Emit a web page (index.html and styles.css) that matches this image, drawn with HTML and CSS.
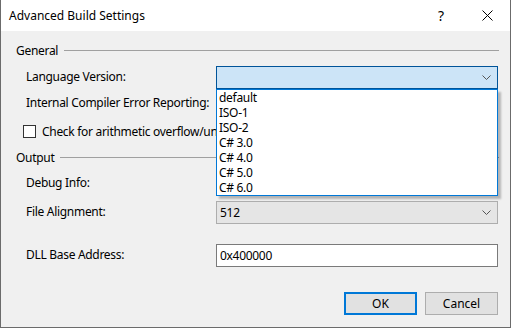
FILE: index.html
```html
<!DOCTYPE html>
<html lang="en">
<head>
  <meta charset="UTF-8">
  <title>Advanced Build Settings</title>
  <link rel="stylesheet" href="styles.css">
</head>
<body>
  <div class="window">
    <div class="titlebar">
      <span class="title">Advanced Build Settings</span>
      <span class="help">?</span>
      <span class="close">
        <svg width="11" height="11" viewBox="0 0 11 11"><path d="M0.5 0.5 L10.5 10.5 M10.5 0.5 L0.5 10.5" stroke="#000" stroke-width="1" fill="none"/></svg>
      </span>
    </div>

    <div class="content">
      <div class="group-head">
        <span>General</span>
        <div class="line"></div>
      </div>

      <div class="row first">
        <label>Language Version:</label>
        <div class="combo-wrap">
          <div class="combo open">
            <span></span>
            <svg class="chev" width="9" height="5" viewBox="0 0 9 5"><path d="M0.5 0.5 L4.5 4.5 L8.5 0.5" stroke="#555" fill="none"/></svg>
          </div>
          <ul class="list">
            <li>default</li>
            <li>ISO-1</li>
            <li>ISO-2</li>
            <li>C# 3.0</li>
            <li>C# 4.0</li>
            <li>C# 5.0</li>
            <li>C# 6.0</li>
          </ul>
        </div>
      </div>

      <div class="row internal">
        <label>Internal Compiler Error Reporting:</label>
        <div class="combo"></div>
      </div>

      <div class="check-row">
        <span class="box"></span>
        <span class="check-text">Check for arithmetic overflow/underflow</span>
      </div>

      <div class="group-head output">
        <span>Output</span>
        <div class="line"></div>
      </div>

      <div class="row debug">
        <label>Debug Info:</label>
        <div class="combo"></div>
      </div>

      <div class="row align">
        <label>File Alignment:</label>
        <div class="combo grey">
          <span>512</span>
          <svg class="chev" width="9" height="5" viewBox="0 0 9 5"><path d="M0.5 0.5 L4.5 4.5 L8.5 0.5" stroke="#555" fill="none"/></svg>
        </div>
      </div>

      <div class="row dll">
        <label>DLL Base Address:</label>
        <div class="textbox">0x400000</div>
      </div>

      <div class="buttons">
        <button class="btn default">OK</button>
        <button class="btn">Cancel</button>
      </div>
    </div>
  </div>
</body>
</html>
```

FILE: styles.css
```css
* {
  box-sizing: border-box;
}
body {
  margin: 0;
  font-family: "Noto Sans", "Noto Sans CJK KR", sans-serif;
  font-size: 12px;
  letter-spacing: -0.3px;
  color: #000;
  background: #fff;
}
.window {
  width: 511px;
  height: 328px;
  border: 1px solid #6b6b6b;
  border-top: none;
  background: #f0f0f0;
  overflow: hidden;
}
.titlebar {
  height: 31px;
  background: #fff;
  display: flex;
  align-items: center;
  padding-left: 8px;
}
.title {
  flex: 1;
  font-size: 12px;
  letter-spacing: 0;
}
.help {
  width: 46px;
  text-align: center;
  font-size: 14px;
}
.close {
  width: 46px;
  display: flex;
  justify-content: center;
}
.content {
  padding: 11px 12px 0 15px;
}
.group-head {
  height: 16px;
  display: flex;
  align-items: center;
  gap: 6px;
}
.group-head .line {
  flex: 1;
  height: 1px;
  background: #a0a0a0;
  margin-right: -1px;
}
.group-head.output {
  margin-top: 10px;
}
.row {
  height: 23px;
  display: flex;
  align-items: center;
  padding-left: 10px;
}
.row label {
  width: 190px;
  flex-shrink: 0;
  white-space: nowrap;
  overflow: hidden;
  padding-bottom: 2px;
}
.row.first { margin-top: 8px; }
.row.internal { margin-top: 3px; }
.row.debug { margin-top: 7px; }
.row.align { margin-top: 6px; }
.row.dll { margin-top: 20px; }
.combo-wrap {
  position: relative;
  flex: 1;
  height: 23px;
}
.combo {
  flex: 1;
  height: 23px;
  border: 1px solid #adadad;
  background: #e5e5e5;
  display: flex;
  align-items: center;
  padding: 0 6px 0 3px;
}
.combo span {
  flex: 1;
}
.combo.open {
  background: #cce4f7;
  border-color: #005499;
}
.chev {
  display: block;
}
.list {
  position: absolute;
  left: 0;
  right: 0;
  top: 23px;
  margin: 0;
  padding: 0;
  list-style: none;
  background: #fff;
  border: 1px solid #0078d7;
  box-shadow: 3px 3px 2px rgba(0, 0, 0, 0.25);
  z-index: 2;
}
.list li {
  height: 15px;
  line-height: 15px;
  padding-left: 2px;
}
/* the open list covers the rest of this text */
.check-row {
  width: 201px;
  height: 16px;
  margin-top: 8px;
  padding-left: 7px;
  display: flex;
  align-items: center;
  gap: 6px;
  white-space: nowrap;
  overflow: hidden;
}
.box {
  width: 13px;
  height: 13px;
  flex-shrink: 0;
  border: 1px solid #333;
  background: #fff;
}
.textbox {
  flex: 1;
  height: 23px;
  border: 1px solid #7a7a7a;
  background: #fff;
  display: flex;
  align-items: center;
  padding-left: 3px;
}
.buttons {
  margin-top: 25px;
  display: flex;
  justify-content: flex-end;
  gap: 8px;
}
.btn {
  width: 73px;
  height: 23px;
  font-family: inherit;
  font-size: 12px;
  letter-spacing: 0;
  background: #e1e1e1;
  border: 1px solid #adadad;
  padding: 0;
}
.btn.default {
  border: 2px solid #0078d7;
}
```
